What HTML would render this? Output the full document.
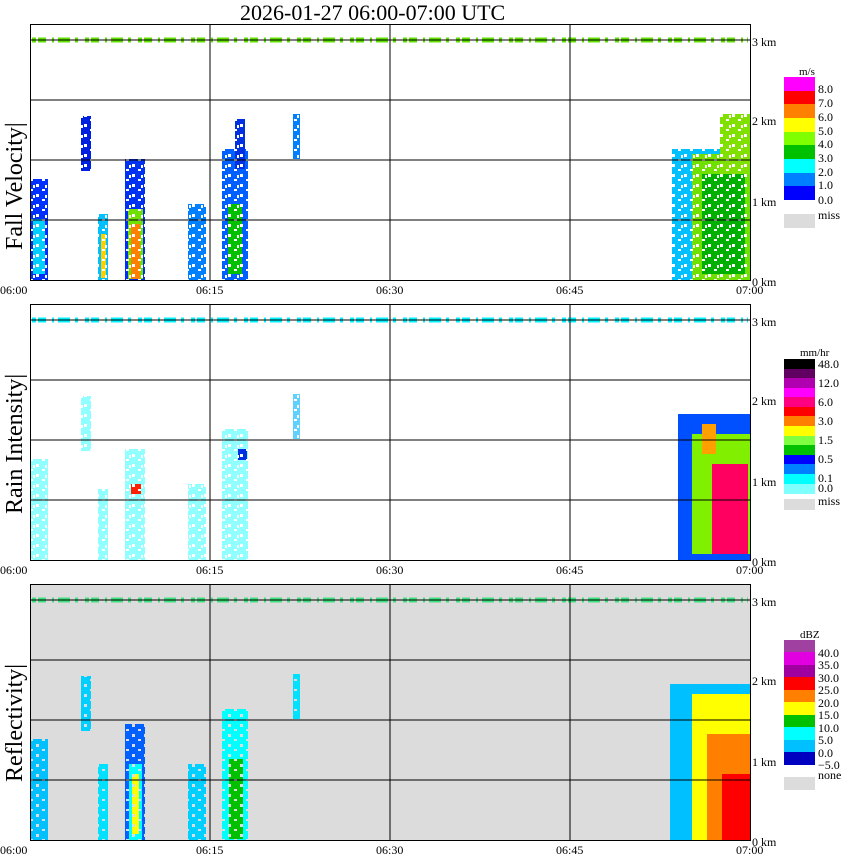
<!DOCTYPE html>
<html><head><meta charset="utf-8"><style>
html,body{margin:0;padding:0;background:#fff;width:850px;height:868px;overflow:hidden}
svg{display:block}
text{font-family:"Liberation Serif",serif;fill:#000}
</style></head><body>
<svg width="850" height="868" viewBox="0 0 850 868" xmlns="http://www.w3.org/2000/svg">
<defs>
<pattern id="spk" width="12" height="10" patternUnits="userSpaceOnUse">
  <rect x="0" y="0" width="3" height="3" fill="#fff"/>
  <rect x="6" y="5" width="3" height="2" fill="#fff"/>
  <rect x="9" y="1" width="2" height="3" fill="#fff"/>
</pattern>
<pattern id="spkg" width="12" height="10" patternUnits="userSpaceOnUse">
  <rect x="0" y="0" width="3" height="3" fill="#dcdcdc"/>
  <rect x="6" y="5" width="3" height="2" fill="#dcdcdc"/>
</pattern>
<g id="grid">
  <line x1="30" y1="16" x2="750" y2="16" stroke="#000"/>
  <line x1="30" y1="76" x2="750" y2="76" stroke="#000"/>
  <line x1="30" y1="136" x2="750" y2="136" stroke="#000"/>
  <line x1="30" y1="196" x2="750" y2="196" stroke="#000"/>
  <line x1="210" y1="0" x2="210" y2="256" stroke="#000"/>
  <line x1="390" y1="0" x2="390" y2="256" stroke="#000"/>
  <line x1="570" y1="0" x2="570" y2="256" stroke="#000"/>
  <rect x="30.5" y="0.5" width="720" height="256" fill="none" stroke="#000"/>
  <text x="752" y="22" font-size="12">3 km</text>
  <text x="752" y="101" font-size="12">2 km</text>
  <text x="752" y="182" font-size="12">1 km</text>
  <text x="752" y="262" font-size="12">0 km</text>
  <text x="0" y="270" font-size="12" font-family="Liberation Sans">06:00</text>
  <text x="196" y="270" font-size="12" font-family="Liberation Sans">06:15</text>
  <text x="376" y="270" font-size="12" font-family="Liberation Sans">06:30</text>
  <text x="556" y="270" font-size="12" font-family="Liberation Sans">06:45</text>
  <text x="736" y="270" font-size="12" font-family="Liberation Sans">07:00</text>
</g>
</defs>

<text x="240" y="20" font-size="22">2026-01-27   06:00-07:00 UTC</text>

<!-- Panel 1 -->
<g transform="translate(0,24)">
  <line x1="32" y1="16" x2="748" y2="16" stroke="#60e000" stroke-width="5" stroke-dasharray="4 2 8 6 2 4 12 5 3 7"/>
  <rect x="30" y="155" width="18" height="101" fill="#0030ff"/>
  <rect x="33" y="195" width="12" height="55" fill="#00d0ff"/>
  <rect x="81" y="92" width="10" height="55" fill="#0020e0"/>
  <rect x="98" y="190" width="10" height="66" fill="#00c0ff"/>
  <rect x="101" y="210" width="5" height="44" fill="#ffd000"/>
  <rect x="125" y="135" width="20" height="121" fill="#0030f0"/>
  <rect x="128" y="185" width="15" height="70" fill="#70e000"/>
  <rect x="131" y="200" width="9" height="55" fill="#ff8000"/>
  <rect x="188" y="180" width="18" height="76" fill="#0080ff"/>
  <rect x="222" y="125" width="26" height="131" fill="#0060ff"/>
  <rect x="228" y="180" width="14" height="70" fill="#00c000"/>
  <rect x="235" y="95" width="10" height="50" fill="#0030e0"/>
  <rect x="293" y="90" width="7" height="45" fill="#0080ff"/>
  <rect x="672" y="125" width="78" height="131" fill="#00c0ff"/>
  <rect x="692" y="130" width="58" height="126" fill="#70e000"/>
  <rect x="702" y="150" width="43" height="100" fill="#00b000"/>
  <rect x="720" y="90" width="30" height="60" fill="#80e000"/>
  <rect x="30" y="85" width="720" height="171" fill="url(#spk)"/>
  <use href="#grid"/>
  <text transform="translate(22,226) rotate(-90)" font-size="24">Fall Velocity|</text>
</g>

<!-- Panel 2 -->
<g transform="translate(0,304)">
  <line x1="32" y1="16" x2="748" y2="16" stroke="#00f0ff" stroke-width="5" stroke-dasharray="4 2 8 6 2 4 12 5 3 7"/>
  <rect x="30" y="155" width="18" height="101" fill="#90ffff"/>
  <rect x="81" y="92" width="10" height="55" fill="#90ffff"/>
  <rect x="98" y="185" width="10" height="71" fill="#90ffff"/>
  <rect x="125" y="145" width="20" height="111" fill="#90ffff"/>
  <rect x="131" y="180" width="10" height="10" fill="#ff2000"/>
  <rect x="188" y="180" width="18" height="76" fill="#90ffff"/>
  <rect x="222" y="125" width="26" height="131" fill="#90ffff"/>
  <rect x="238" y="145" width="9" height="11" fill="#0030e0"/>
  <rect x="293" y="90" width="7" height="45" fill="#60d0ff"/>
  <rect x="30" y="85" width="270" height="171" fill="url(#spk)"/>
  <rect x="678" y="110" width="72" height="146" fill="#0050ff"/>
  <rect x="692" y="130" width="58" height="120" fill="#80f000"/>
  <rect x="712" y="160" width="36" height="90" fill="#ff0060"/>
  <rect x="702" y="120" width="14" height="30" fill="#ffa000"/>
  <use href="#grid"/>
  <text transform="translate(22,210) rotate(-90)" font-size="24">Rain Intensity|</text>
</g>

<!-- Panel 3 -->
<g transform="translate(0,584)">
  <rect x="30" y="0" width="720" height="256" fill="#dcdcdc"/>
  <line x1="32" y1="16" x2="748" y2="16" stroke="#40e080" stroke-width="5" stroke-dasharray="4 2 8 6 2 4 12 5 3 7"/>
  <rect x="30" y="155" width="18" height="101" fill="#00c0ff"/>
  <rect x="81" y="92" width="10" height="55" fill="#00d0ff"/>
  <rect x="98" y="180" width="10" height="76" fill="#00e0ff"/>
  <rect x="125" y="140" width="20" height="116" fill="#0060ff"/>
  <rect x="129" y="180" width="13" height="76" fill="#00ffff"/>
  <rect x="132" y="190" width="7" height="60" fill="#ffff00"/>
  <rect x="188" y="180" width="18" height="76" fill="#00d0ff"/>
  <rect x="222" y="125" width="26" height="131" fill="#00ffff"/>
  <rect x="229" y="175" width="14" height="80" fill="#00c000"/>
  <rect x="293" y="90" width="7" height="45" fill="#00e0ff"/>
  <rect x="30" y="85" width="270" height="171" fill="url(#spkg)"/>
  <rect x="670" y="100" width="80" height="156" fill="#00c0ff"/>
  <rect x="692" y="110" width="58" height="146" fill="#ffff00"/>
  <rect x="707" y="150" width="43" height="106" fill="#ff8000"/>
  <rect x="722" y="190" width="28" height="66" fill="#ff0000"/>
  <use href="#grid"/>
  <text transform="translate(22,198) rotate(-90)" font-size="24">Reflectivity|</text>
</g>

<!-- Legend 1 -->
<g font-size="12">
  <text x="799" y="75" font-size="11">m/s</text>
  <rect x="784" y="77" width="31" height="14" fill="#ff00ff"/>
  <rect x="784" y="91" width="31" height="13" fill="#ff0000"/>
  <rect x="784" y="104" width="31" height="14" fill="#ff8000"/>
  <rect x="784" y="118" width="31" height="14" fill="#ffff00"/>
  <rect x="784" y="132" width="31" height="13" fill="#80ff00"/>
  <rect x="784" y="145" width="31" height="14" fill="#00c000"/>
  <rect x="784" y="159" width="31" height="14" fill="#00ffff"/>
  <rect x="784" y="173" width="31" height="13" fill="#0080ff"/>
  <rect x="784" y="186" width="31" height="14" fill="#0000ff"/>
  <rect x="784" y="214" width="31" height="14" fill="#dcdcdc"/>
  <text x="818" y="93">8.0</text><text x="818" y="107">7.0</text><text x="818" y="121">6.0</text>
  <text x="818" y="135">5.0</text><text x="818" y="148">4.0</text><text x="818" y="162">3.0</text>
  <text x="818" y="176">2.0</text><text x="818" y="189">1.0</text><text x="818" y="204">0.0</text>
  <text x="818" y="219">miss</text>
</g>
<!-- Legend 2 -->
<g font-size="12">
  <text x="800" y="356" font-size="11">mm/hr</text>
  <rect x="784" y="359" width="31" height="10" fill="#000"/>
  <rect x="784" y="369" width="31" height="9" fill="#600060"/>
  <rect x="784" y="378" width="31" height="10" fill="#b000b0"/>
  <rect x="784" y="388" width="31" height="9" fill="#ff00ff"/>
  <rect x="784" y="397" width="31" height="10" fill="#ff0080"/>
  <rect x="784" y="407" width="31" height="9" fill="#ff0000"/>
  <rect x="784" y="416" width="31" height="10" fill="#ff8000"/>
  <rect x="784" y="426" width="31" height="10" fill="#ffff00"/>
  <rect x="784" y="436" width="31" height="9" fill="#80ff40"/>
  <rect x="784" y="445" width="31" height="10" fill="#00c000"/>
  <rect x="784" y="455" width="31" height="9" fill="#0000ff"/>
  <rect x="784" y="464" width="31" height="10" fill="#0080ff"/>
  <rect x="784" y="474" width="31" height="10" fill="#00ffff"/>
  <rect x="784" y="484" width="31" height="10" fill="#80ffff"/>
  <rect x="784" y="499" width="31" height="11" fill="#dcdcdc"/>
  <text x="818" y="368">48.0</text><text x="818" y="387">12.0</text><text x="818" y="406">6.0</text>
  <text x="818" y="425">3.0</text><text x="818" y="444">1.5</text><text x="818" y="463">0.5</text>
  <text x="818" y="482">0.1</text><text x="818" y="492">0.0</text><text x="818" y="505">miss</text>
</g>
<!-- Legend 3 -->
<g font-size="12">
  <text x="800" y="638" font-size="11">dBZ</text>
  <rect x="784" y="640" width="31" height="13" fill="#a040a0"/>
  <rect x="784" y="652" width="31" height="13" fill="#e000e0"/>
  <rect x="784" y="665" width="31" height="13" fill="#a000a0"/>
  <rect x="784" y="677" width="31" height="13" fill="#ff0000"/>
  <rect x="784" y="690" width="31" height="13" fill="#ff8000"/>
  <rect x="784" y="702" width="31" height="13" fill="#ffff00"/>
  <rect x="784" y="715" width="31" height="13" fill="#00c000"/>
  <rect x="784" y="727" width="31" height="13" fill="#00ffff"/>
  <rect x="784" y="740" width="31" height="13" fill="#00c0ff"/>
  <rect x="784" y="752" width="31" height="13" fill="#0000c0"/>
  <rect x="784" y="777" width="31" height="13" fill="#dcdcdc"/>
  <text x="818" y="657">40.0</text><text x="818" y="669">35.0</text><text x="818" y="682">30.0</text>
  <text x="818" y="694">25.0</text><text x="818" y="707">20.0</text><text x="818" y="719">15.0</text>
  <text x="818" y="732">10.0</text><text x="818" y="744">5.0</text><text x="818" y="757">0.0</text>
  <text x="818" y="769">−5.0</text><text x="818" y="779">none</text>
</g>
</svg>
</body></html>
